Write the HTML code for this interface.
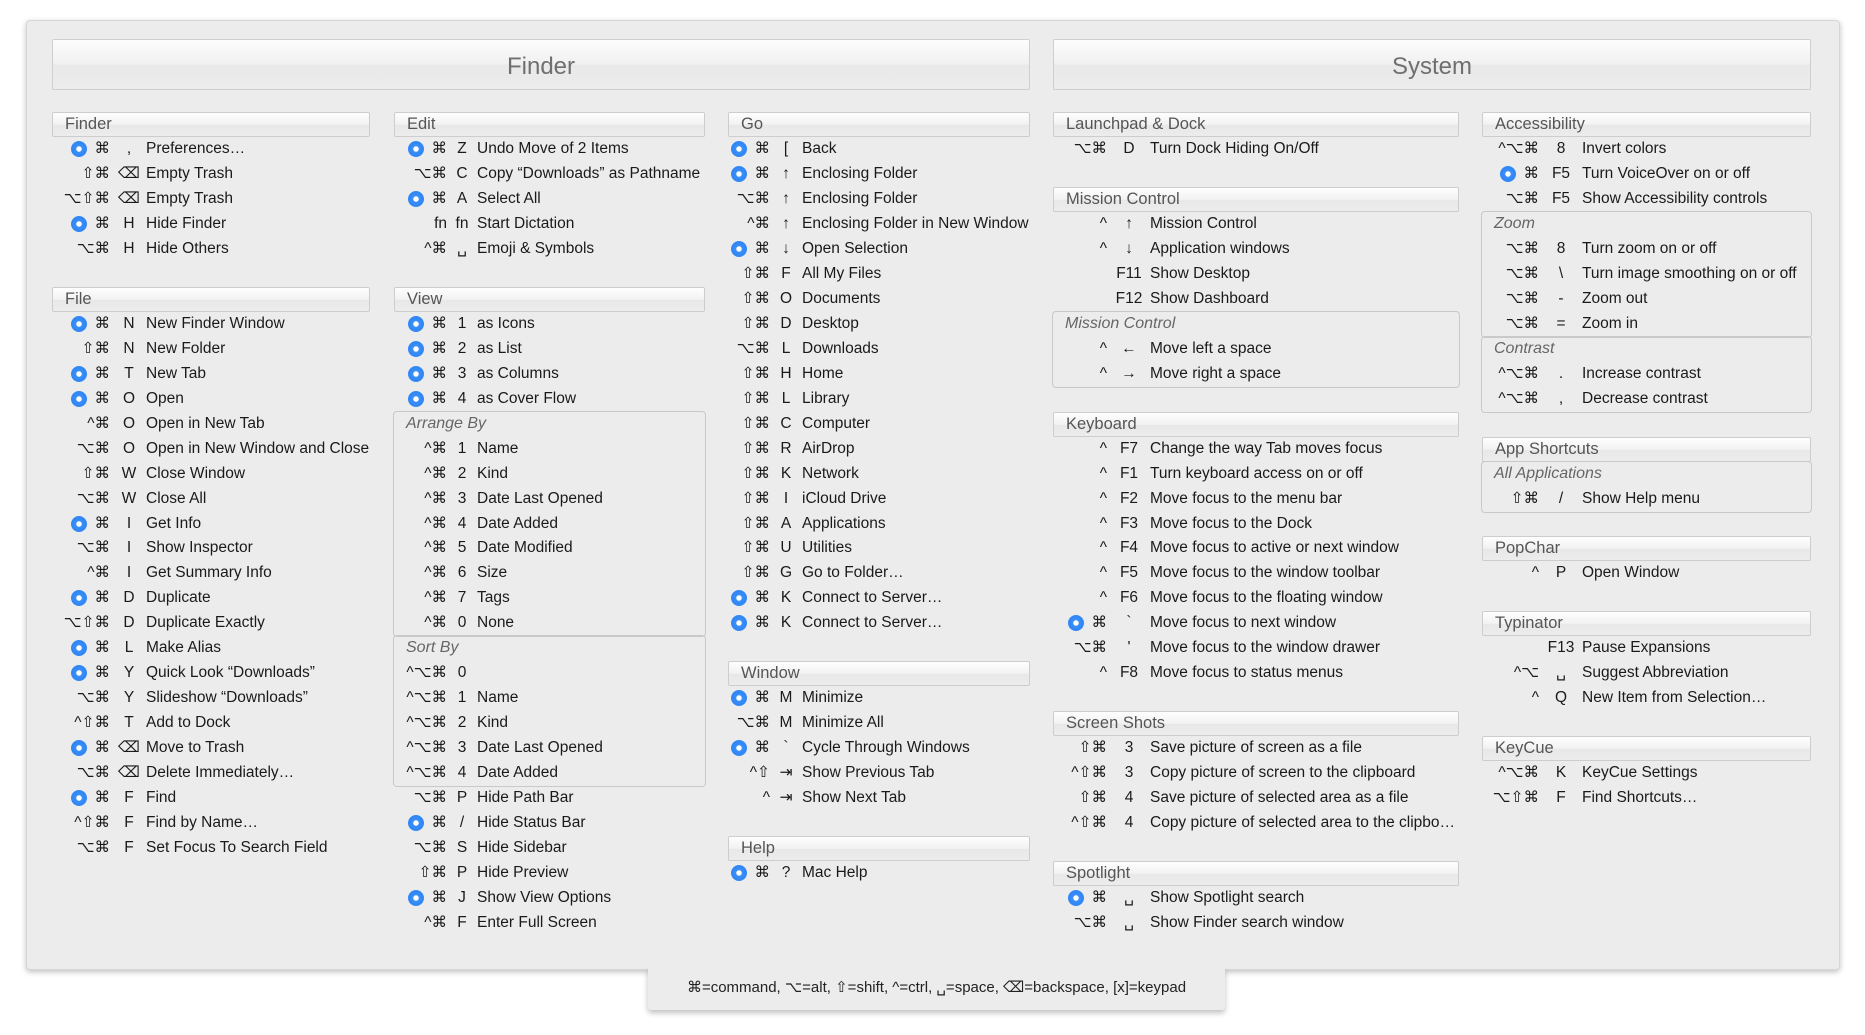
<!DOCTYPE html>
<html><head><meta charset="utf-8">
<style>
*{margin:0;padding:0;box-sizing:border-box}
html,body{width:1865px;height:1035px;background:#fff;overflow:hidden;font-family:"Liberation Sans","DejaVu Sans",sans-serif}
.panel{position:absolute;left:26px;top:20px;width:1814px;height:950px;background:#ececec;border:1px solid #d6d6d6;border-radius:4px;box-shadow:0 2px 6px rgba(0,0,0,.25)}
.foot{position:absolute;left:648px;top:968px;width:577px;height:42px;background:#ececec;box-shadow:0 3px 6px rgba(0,0,0,.25);border-radius:0 0 3px 3px;font-size:15px;color:#222;text-align:center;line-height:40px}
.foot:before{content:"";position:absolute;left:0;right:0;top:-6px;height:8px;background:#ececec}
.big{position:absolute;top:39px;height:51px;border:1px solid #cfcfcf;border-radius:2px;background:linear-gradient(#fdfdfd,#f0f0f0 50%,#e9e9e9 51%,#ececec);text-align:center;line-height:54px;font-size:24px;color:#6f6f6f}
.col{position:absolute;top:112px}
.r{position:relative;height:24.98px;line-height:24.98px;font-size:15.5px;color:#1a1a1a;white-space:nowrap}
.r b{position:absolute;left:0;width:var(--m);text-align:right;font-weight:normal}
.r u{position:absolute;left:calc(var(--k) - 15px);width:30px;text-align:center;text-decoration:none}
.r span{position:absolute;left:var(--l)}
.r i{position:absolute;left:calc(var(--c) - 8px);top:4px;width:16px;height:16px;border-radius:50%;background:radial-gradient(circle,#fff 0 2.4px,#3c8ff7 3px,#2f86f5 60%,#4a97f5)}
.h{height:24.98px;border:1px solid #cdcdcd;border-radius:2px;background:linear-gradient(#fefefe,#f2f2f2 50%,#e8e8e8 52%,#ececec);font-size:16.5px;color:#555;line-height:23px;padding-left:12px}
.s{box-shadow:0 0 0 1px #c9c9c9;border-radius:3px;margin:0 0 0 0}
.st{height:24.98px;line-height:24.98px;font-size:16px;font-style:italic;color:#666;padding-left:12px}
.c1{left:52px;width:318px;--c:27px;--m:58px;--k:77px;--l:94px}
.c2{left:394px;width:311px;--c:22px;--m:53px;--k:68px;--l:83px}
.c3{left:728px;width:302px;--c:11px;--m:42px;--k:58px;--l:74px}
.c4{left:1053px;width:406px;--c:23px;--m:54px;--k:76px;--l:97px}
.c5{left:1482px;width:329px;--c:26px;--m:57px;--k:79px;--l:100px}
</style></head><body>
<div class="panel"></div>
<div class="foot">⌘=command, ⌥=alt, ⇧=shift, ^=ctrl, ␣=space, ⌫=backspace, [x]=keypad</div>
<div class="big" style="left:52px;width:978px">Finder</div>
<div class="big" style="left:1053px;width:758px">System</div>

<div class="col c1">
<div class="h">Finder</div>
<div class="r"><i></i><b>⌘</b><u>,</u><span>Preferences…</span></div>
<div class="r"><b>⇧⌘</b><u>⌫</u><span>Empty Trash</span></div>
<div class="r"><b>⌥⇧⌘</b><u>⌫</u><span>Empty Trash</span></div>
<div class="r"><i></i><b>⌘</b><u>H</u><span>Hide Finder</span></div>
<div class="r"><b>⌥⌘</b><u>H</u><span>Hide Others</span></div>
<div class="r"></div>
<div class="h">File</div>
<div class="r"><i></i><b>⌘</b><u>N</u><span>New Finder Window</span></div>
<div class="r"><b>⇧⌘</b><u>N</u><span>New Folder</span></div>
<div class="r"><i></i><b>⌘</b><u>T</u><span>New Tab</span></div>
<div class="r"><i></i><b>⌘</b><u>O</u><span>Open</span></div>
<div class="r"><b>^⌘</b><u>O</u><span>Open in New Tab</span></div>
<div class="r"><b>⌥⌘</b><u>O</u><span>Open in New Window and Close</span></div>
<div class="r"><b>⇧⌘</b><u>W</u><span>Close Window</span></div>
<div class="r"><b>⌥⌘</b><u>W</u><span>Close All</span></div>
<div class="r"><i></i><b>⌘</b><u>I</u><span>Get Info</span></div>
<div class="r"><b>⌥⌘</b><u>I</u><span>Show Inspector</span></div>
<div class="r"><b>^⌘</b><u>I</u><span>Get Summary Info</span></div>
<div class="r"><i></i><b>⌘</b><u>D</u><span>Duplicate</span></div>
<div class="r"><b>⌥⇧⌘</b><u>D</u><span>Duplicate Exactly</span></div>
<div class="r"><i></i><b>⌘</b><u>L</u><span>Make Alias</span></div>
<div class="r"><i></i><b>⌘</b><u>Y</u><span>Quick Look “Downloads”</span></div>
<div class="r"><b>⌥⌘</b><u>Y</u><span>Slideshow “Downloads”</span></div>
<div class="r"><b>^⇧⌘</b><u>T</u><span>Add to Dock</span></div>
<div class="r"><i></i><b>⌘</b><u>⌫</u><span>Move to Trash</span></div>
<div class="r"><b>⌥⌘</b><u>⌫</u><span>Delete Immediately…</span></div>
<div class="r"><i></i><b>⌘</b><u>F</u><span>Find</span></div>
<div class="r"><b>^⇧⌘</b><u>F</u><span>Find by Name…</span></div>
<div class="r"><b>⌥⌘</b><u>F</u><span>Set Focus To Search Field</span></div>
</div>

<div class="col c2">
<div class="h">Edit</div>
<div class="r"><i></i><b>⌘</b><u>Z</u><span>Undo Move of 2 Items</span></div>
<div class="r"><b>⌥⌘</b><u>C</u><span>Copy “Downloads” as Pathname</span></div>
<div class="r"><i></i><b>⌘</b><u>A</u><span>Select All</span></div>
<div class="r"><b>fn</b><u>fn</u><span>Start Dictation</span></div>
<div class="r"><b>^⌘</b><u>␣</u><span>Emoji &amp; Symbols</span></div>
<div class="r"></div>
<div class="h">View</div>
<div class="r"><i></i><b>⌘</b><u>1</u><span>as Icons</span></div>
<div class="r"><i></i><b>⌘</b><u>2</u><span>as List</span></div>
<div class="r"><i></i><b>⌘</b><u>3</u><span>as Columns</span></div>
<div class="r"><i></i><b>⌘</b><u>4</u><span>as Cover Flow</span></div>
<div class="s">
<div class="st">Arrange By</div>
<div class="r"><b>^⌘</b><u>1</u><span>Name</span></div>
<div class="r"><b>^⌘</b><u>2</u><span>Kind</span></div>
<div class="r"><b>^⌘</b><u>3</u><span>Date Last Opened</span></div>
<div class="r"><b>^⌘</b><u>4</u><span>Date Added</span></div>
<div class="r"><b>^⌘</b><u>5</u><span>Date Modified</span></div>
<div class="r"><b>^⌘</b><u>6</u><span>Size</span></div>
<div class="r"><b>^⌘</b><u>7</u><span>Tags</span></div>
<div class="r"><b>^⌘</b><u>0</u><span>None</span></div>
</div>
<div class="s">
<div class="st">Sort By</div>
<div class="r"><b>^⌥⌘</b><u>0</u><span></span></div>
<div class="r"><b>^⌥⌘</b><u>1</u><span>Name</span></div>
<div class="r"><b>^⌥⌘</b><u>2</u><span>Kind</span></div>
<div class="r"><b>^⌥⌘</b><u>3</u><span>Date Last Opened</span></div>
<div class="r"><b>^⌥⌘</b><u>4</u><span>Date Added</span></div>
</div>
<div class="r"><b>⌥⌘</b><u>P</u><span>Hide Path Bar</span></div>
<div class="r"><i></i><b>⌘</b><u>/</u><span>Hide Status Bar</span></div>
<div class="r"><b>⌥⌘</b><u>S</u><span>Hide Sidebar</span></div>
<div class="r"><b>⇧⌘</b><u>P</u><span>Hide Preview</span></div>
<div class="r"><i></i><b>⌘</b><u>J</u><span>Show View Options</span></div>
<div class="r"><b>^⌘</b><u>F</u><span>Enter Full Screen</span></div>
</div>

<div class="col c3">
<div class="h">Go</div>
<div class="r"><i></i><b>⌘</b><u>[</u><span>Back</span></div>
<div class="r"><i></i><b>⌘</b><u>↑</u><span>Enclosing Folder</span></div>
<div class="r"><b>⌥⌘</b><u>↑</u><span>Enclosing Folder</span></div>
<div class="r"><b>^⌘</b><u>↑</u><span>Enclosing Folder in New Window</span></div>
<div class="r"><i></i><b>⌘</b><u>↓</u><span>Open Selection</span></div>
<div class="r"><b>⇧⌘</b><u>F</u><span>All My Files</span></div>
<div class="r"><b>⇧⌘</b><u>O</u><span>Documents</span></div>
<div class="r"><b>⇧⌘</b><u>D</u><span>Desktop</span></div>
<div class="r"><b>⌥⌘</b><u>L</u><span>Downloads</span></div>
<div class="r"><b>⇧⌘</b><u>H</u><span>Home</span></div>
<div class="r"><b>⇧⌘</b><u>L</u><span>Library</span></div>
<div class="r"><b>⇧⌘</b><u>C</u><span>Computer</span></div>
<div class="r"><b>⇧⌘</b><u>R</u><span>AirDrop</span></div>
<div class="r"><b>⇧⌘</b><u>K</u><span>Network</span></div>
<div class="r"><b>⇧⌘</b><u>I</u><span>iCloud Drive</span></div>
<div class="r"><b>⇧⌘</b><u>A</u><span>Applications</span></div>
<div class="r"><b>⇧⌘</b><u>U</u><span>Utilities</span></div>
<div class="r"><b>⇧⌘</b><u>G</u><span>Go to Folder…</span></div>
<div class="r"><i></i><b>⌘</b><u>K</u><span>Connect to Server…</span></div>
<div class="r"><i></i><b>⌘</b><u>K</u><span>Connect to Server…</span></div>
<div class="r"></div>
<div class="h">Window</div>
<div class="r"><i></i><b>⌘</b><u>M</u><span>Minimize</span></div>
<div class="r"><b>⌥⌘</b><u>M</u><span>Minimize All</span></div>
<div class="r"><i></i><b>⌘</b><u>`</u><span>Cycle Through Windows</span></div>
<div class="r"><b>^⇧</b><u>⇥</u><span>Show Previous Tab</span></div>
<div class="r"><b>^</b><u>⇥</u><span>Show Next Tab</span></div>
<div class="r"></div>
<div class="h">Help</div>
<div class="r"><i></i><b>⌘</b><u>?</u><span>Mac Help</span></div>
</div>

<div class="col c4">
<div class="h">Launchpad &amp; Dock</div>
<div class="r"><b>⌥⌘</b><u>D</u><span>Turn Dock Hiding On/Off</span></div>
<div class="r"></div>
<div class="h">Mission Control</div>
<div class="r"><b>^</b><u>↑</u><span>Mission Control</span></div>
<div class="r"><b>^</b><u>↓</u><span>Application windows</span></div>
<div class="r"><b></b><u>F11</u><span>Show Desktop</span></div>
<div class="r"><b></b><u>F12</u><span>Show Dashboard</span></div>
<div class="s">
<div class="st">Mission Control</div>
<div class="r"><b>^</b><u>←</u><span>Move left a space</span></div>
<div class="r"><b>^</b><u>→</u><span>Move right a space</span></div>
</div>
<div class="r"></div>
<div class="h">Keyboard</div>
<div class="r"><b>^</b><u>F7</u><span>Change the way Tab moves focus</span></div>
<div class="r"><b>^</b><u>F1</u><span>Turn keyboard access on or off</span></div>
<div class="r"><b>^</b><u>F2</u><span>Move focus to the menu bar</span></div>
<div class="r"><b>^</b><u>F3</u><span>Move focus to the Dock</span></div>
<div class="r"><b>^</b><u>F4</u><span>Move focus to active or next window</span></div>
<div class="r"><b>^</b><u>F5</u><span>Move focus to the window toolbar</span></div>
<div class="r"><b>^</b><u>F6</u><span>Move focus to the floating window</span></div>
<div class="r"><i></i><b>⌘</b><u>`</u><span>Move focus to next window</span></div>
<div class="r"><b>⌥⌘</b><u>'</u><span>Move focus to the window drawer</span></div>
<div class="r"><b>^</b><u>F8</u><span>Move focus to status menus</span></div>
<div class="r"></div>
<div class="h">Screen Shots</div>
<div class="r"><b>⇧⌘</b><u>3</u><span>Save picture of screen as a file</span></div>
<div class="r"><b>^⇧⌘</b><u>3</u><span>Copy picture of screen to the clipboard</span></div>
<div class="r"><b>⇧⌘</b><u>4</u><span>Save picture of selected area as a file</span></div>
<div class="r"><b>^⇧⌘</b><u>4</u><span>Copy picture of selected area to the clipbo…</span></div>
<div class="r"></div>
<div class="h">Spotlight</div>
<div class="r"><i></i><b>⌘</b><u>␣</u><span>Show Spotlight search</span></div>
<div class="r"><b>⌥⌘</b><u>␣</u><span>Show Finder search window</span></div>
</div>

<div class="col c5">
<div class="h">Accessibility</div>
<div class="r"><b>^⌥⌘</b><u>8</u><span>Invert colors</span></div>
<div class="r"><i></i><b>⌘</b><u>F5</u><span>Turn VoiceOver on or off</span></div>
<div class="r"><b>⌥⌘</b><u>F5</u><span>Show Accessibility controls</span></div>
<div class="s">
<div class="st">Zoom</div>
<div class="r"><b>⌥⌘</b><u>8</u><span>Turn zoom on or off</span></div>
<div class="r"><b>⌥⌘</b><u>\</u><span>Turn image smoothing on or off</span></div>
<div class="r"><b>⌥⌘</b><u>-</u><span>Zoom out</span></div>
<div class="r"><b>⌥⌘</b><u>=</u><span>Zoom in</span></div>
</div>
<div class="s">
<div class="st">Contrast</div>
<div class="r"><b>^⌥⌘</b><u>.</u><span>Increase contrast</span></div>
<div class="r"><b>^⌥⌘</b><u>,</u><span>Decrease contrast</span></div>
</div>
<div class="r"></div>
<div class="h">App Shortcuts</div>
<div class="s">
<div class="st">All Applications</div>
<div class="r"><b>⇧⌘</b><u>/</u><span>Show Help menu</span></div>
</div>
<div class="r"></div>
<div class="h">PopChar</div>
<div class="r"><b>^</b><u>P</u><span>Open Window</span></div>
<div class="r"></div>
<div class="h">Typinator</div>
<div class="r"><b></b><u>F13</u><span>Pause Expansions</span></div>
<div class="r"><b>^⌥</b><u>␣</u><span>Suggest Abbreviation</span></div>
<div class="r"><b>^</b><u>Q</u><span>New Item from Selection…</span></div>
<div class="r"></div>
<div class="h">KeyCue</div>
<div class="r"><b>^⌥⌘</b><u>K</u><span>KeyCue Settings</span></div>
<div class="r"><b>⌥⇧⌘</b><u>F</u><span>Find Shortcuts…</span></div>
</div>
</body></html>
